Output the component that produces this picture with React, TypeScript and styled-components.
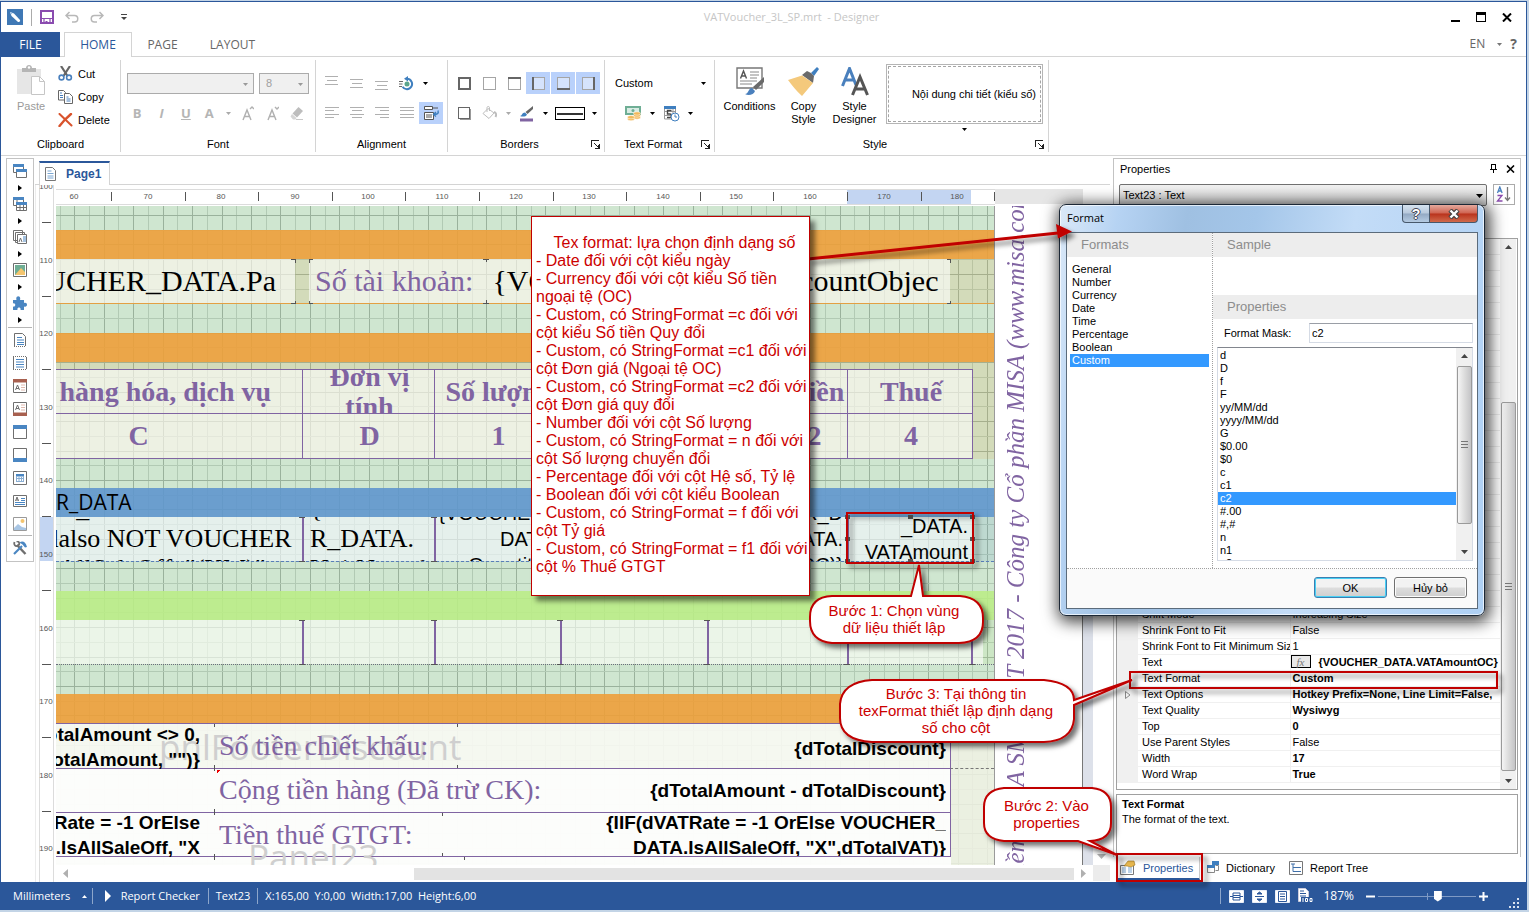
import React from "react";
import styled, { createGlobalStyle, css } from "styled-components";

const BLUE = "#2b579a";
const PURPLE = "#8064a2";
const RED = "#c00000";
const INK = "#cc0000";
const UI = `"Liberation Sans", Arial, sans-serif`;
const HUMAN = `"Open Sans", "Noto Sans", sans-serif`;
const SERIF = `"Liberation Serif", "Times New Roman", serif`;

const GlobalStyle = createGlobalStyle`
  * { box-sizing: border-box; }
  body { margin: 0; font-family: ${UI}; font-size: 11px; color: #000; overflow: hidden; }
  button, input, select { font: inherit; color: inherit; margin: 0; }
  button { padding: 0; border: 0; background: none; }
  ul { margin: 0; padding: 0; list-style: none; }
  svg { display: block; flex: none; }
`;

/* ---------- frame ---------- */

const Desktop = styled.div`
  position: relative;
  min-height: 100vh;
  padding: 1px 2px 2px 0;
  background: #c3d4e6;
  display: flex;
`;

const Window = styled.div`
  flex: 1;
  min-width: 0;
  display: flex;
  flex-direction: column;
  background: #fff;
  border: 1px solid ${BLUE};
  border-bottom: 0;
`;

const TitleBar = styled.header`
  display: flex;
  align-items: center;
  height: 30px;
  padding: 0 14px 0 6px;
`;

const QuickAccess = styled.div`
  display: flex;
  align-items: center;
  gap: 8px;
`;

const QuickButton = styled.button`
  margin-left: 3px;
`;

const QuickDivider = styled.span`
  width: 1px;
  height: 17px;
  background: #ababab;
`;

const Title = styled.h1`
  flex: 1;
  margin: 0;
  text-align: center;
  white-space: pre;
  font: 400 11px/16px ${HUMAN};
  color: #c6c6c6;
`;

const CaptionButtons = styled.div`
  display: flex;
  align-items: center;
  gap: 16px;
`;

const TabBar = styled.nav`
  display: flex;
  height: 25px;
  border-bottom: 1px solid #d4d4d4;
  font: 12px/24px ${HUMAN};
  color: #666;
`;

const RibbonTab = styled.button<{ $kind?: "file" | "active"; $width: number }>`
  width: ${(p) => p.$width}px;
  height: 25px;
  ${(p) =>
    p.$kind === "file" &&
    css`
      background: ${BLUE};
      color: #fff;
      margin-right: 4px;
    `}
  ${(p) =>
    p.$kind === "active" &&
    css`
      border: 1px solid #d4d4d4;
      border-bottom: 0;
      background: #fff;
      color: ${BLUE};
    `}
`;

const Language = styled.div`
  margin-left: auto;
  display: flex;
  align-items: center;
  gap: 12px;
  padding-right: 9px;
  b { font: 700 14px/24px ${HUMAN}; margin-left: -4px; }
`;

/* ---------- ribbon ---------- */

const Ribbon = styled.section`
  display: flex;
  height: 99px;
  padding: 3px 0;
  border-bottom: 1px solid #d4d4d4;
`;

const Group = styled.div<{ $width: number }>`
  position: relative;
  width: ${(p) => p.$width}px;
  display: flex;
  flex-direction: column;
  border-right: 1px solid #d4d4d4;
`;

const GroupBody = styled.div<{ $pad?: string }>`
  height: 76px;
  padding: ${(p) => p.$pad ?? "11px 6px 0"};
  display: flex;
  flex-direction: column;
  gap: 6px;
`;

const GroupLabel = styled.div<{ $launcher?: boolean }>`
  display: flex;
  align-items: center;
  height: 16px;
  text-align: center;
  padding-right: ${(p) => (p.$launcher ? 4 : 0)}px;
  & > span { flex: 1; }
`;

const ToolRow = styled.div<{ $gap?: number; $indent?: number }>`
  display: flex;
  align-items: center;
  height: 24px;
  gap: ${(p) => p.$gap ?? 0}px;
  padding-left: ${(p) => p.$indent ?? 0}px;
`;

const ToolButton = styled.button<{ $on?: boolean; $width?: number }>`
  display: flex;
  align-items: center;
  justify-content: center;
  width: ${(p) => p.$width ?? 25}px;
  height: 22px;
  border-right: ${(p) => (p.$on ? "1px solid #fff" : "0")};
  background: ${(p) => (p.$on ? "#b9d1fb" : "transparent")};
  color: #b5b5b5;
  font: 700 13px/20px ${HUMAN};
`;

const ComboWrap = styled.label<{ $width: number; $plain?: boolean }>`
  position: relative;
  display: flex;
  align-items: center;
  width: ${(p) => p.$width}px;
  height: 21px;
  border: ${(p) => (p.$plain ? "0" : "1px solid #ababab")};
  background: ${(p) => (p.$plain ? "#fff" : "#f0f0f0")};
  select {
    appearance: none;
    width: 100%;
    height: 100%;
    border: 0;
    padding: 0 6px;
    background: transparent;
    color: ${(p) => (p.$plain ? "#000" : "#a0a0a0")};
    opacity: 1;
  }
  svg { position: absolute; right: 5px; top: 9px; }
`;

const ClipboardBody = styled.div`
  display: flex;
  height: 76px;
  padding: 2px 0 0 15px;
  gap: 12px;
`;

const BigButton = styled.button<{ $muted?: boolean; $width: number }>`
  display: flex;
  flex-direction: column;
  align-items: center;
  width: ${(p) => p.$width}px;
  padding-top: 3px;
  gap: 4px;
  line-height: 13px;
  color: ${(p) => (p.$muted ? "#9a9a9a" : "#000")};
`;

const SmallButton = styled.button`
  display: flex;
  align-items: center;
  gap: 5px;
  height: 23px;
`;

const StyleBody = styled.div`
  display: flex;
  height: 76px;
  padding: 4px 5px 0 7px;
`;

const StylePreview = styled.button`
  display: block;
  width: 157px;
  height: 60px;
  margin-left: auto;
  padding: 1px;
  border: 1px solid #b5b5b5;
  span {
    display: flex;
    align-items: center;
    justify-content: flex-end;
    height: 56px;
    padding-right: 4px;
    border: 1px dashed #a6a6a6;
    white-space: nowrap;
  }
`;

const StyleMore = styled.button`
  position: absolute;
  right: 81px;
  bottom: 21px;
`;

/* ---------- work area ---------- */

const Main = styled.main`
  flex: 1;
  min-height: 0;
  display: flex;
`;

const Toolbox = styled.aside`
  align-self: flex-start;
  width: 28px;
  margin: 2px 0 0 5px;
  padding: 3px 0 1px;
  border: 1px solid #c3c3c3;
`;

const ToolboxButton = styled.button<{ $height: number }>`
  display: flex;
  align-items: center;
  justify-content: center;
  width: 26px;
  height: ${(p) => p.$height}px;
`;

const ToolboxLine = styled.hr`
  height: 1px;
  margin: 0 1px;
  border: 0;
  background: #b5b5b5;
`;

const Editor = styled.section`
  flex: 1;
  min-width: 0;
  margin: 5px 3px 0 1px;
  display: flex;
  flex-direction: column;
`;

const PageTabs = styled.div`
  height: 24px;
  padding-left: 4px;
  border-bottom: 1px solid #d4d4d4;
`;

const PageTab = styled.button`
  display: flex;
  align-items: center;
  gap: 10px;
  width: 71px;
  height: 24px;
  padding-left: 5px;
  border: 1px solid #d4d4d4;
  border-top: 2px solid ${BLUE};
  border-bottom: 0;
  background: #fff;
  color: ${BLUE};
  font-weight: 700;
  font-size: 12px;
`;

const EditorGrid = styled.div`
  flex: 1;
  min-height: 0;
  display: grid;
  grid-template-columns: 20px minmax(0, 1fr) 10px 17px;
  grid-template-rows: 21px minmax(0, 1fr) 17px;
  border-left: 1px solid #ececec;
`;

const VRuler = styled.div`
  grid-row: 1 / span 3;
  overflow: hidden;
  position: relative;
  svg { position: absolute; inset: 0; }
`;

const HRuler = styled.div`
  overflow: hidden;
  position: relative;
  grid-column: 2 / span 3;
  svg { position: absolute; inset: 0; }
`;

const Canvas = styled.div`
  grid-column: 2;
  grid-row: 2;
  position: relative;
  overflow: hidden;
  display: flex;
  border-right: 1px solid #777;
`;

const Gutter = styled.div`
  grid-column: 3;
  grid-row: 2;
  background: #dde1ea;
`;

const VScroll = styled.div`
  grid-column: 4;
  grid-row: 2;
  display: flex;
  align-items: flex-end;
  justify-content: center;
  padding-bottom: 4px;
`;

const HScroll = styled.div`
  grid-column: 2 / span 2;
  grid-row: 3;
  display: flex;
  align-items: center;
  padding: 0 5px 0 6px;
`;

const HThumb = styled.div`
  width: 660px;
  height: 12px;
  margin: 0 5px 0 auto;
  background: #e3e3e3;
`;

const ScrollCorner = styled.div`
  grid-column: 4;
  grid-row: 3;
  background: #ececec;
  margin-bottom: 1px;
`;

/* ---------- report sheet ---------- */

const Sheet = styled.div`
  position: relative;
  flex: none;
  width: 939px;
  background: #cfe6d0;
  border-right: 1px solid #9a9a9a;
  & > svg { position: absolute; inset: 0; }
`;

const Bands = styled.div`
  position: relative;
  padding-top: 24px;
`;

const BandGap = styled.div<{ $height: number }>`
  height: ${(p) => p.$height}px;
`;

const BandHeader = styled.div<{ $rgb: string; $height: number }>`
  height: ${(p) => p.$height}px;
  background: rgba(${(p) => p.$rgb}, 0.9);
  overflow: hidden;
  font: 21px/28px ${HUMAN};
  white-space: nowrap;
`;

const Band = styled.div<{ $rgb: string; $height: number; $line?: string }>`
  position: relative;
  height: ${(p) => p.$height}px;
  background: rgba(${(p) => p.$rgb}, 0.15);
  border-bottom: ${(p) => p.$line ?? "0"};
`;

type BoxProps = {
  $x: number;
  $y?: number;
  $w: number;
  $h: number;
  $align?: string;
  $font?: string;
  $color?: string;
  $border?: string;
  $side?: string;
  $bottom?: string;
  $fill?: number;
};

const ReportBox = styled.div<BoxProps>`
  position: absolute;
  left: ${(p) => p.$x}px;
  top: ${(p) => p.$y ?? 0}px;
  width: ${(p) => p.$w}px;
  height: ${(p) => p.$h}px;
  display: flex;
  align-items: center;
  justify-content: ${(p) => p.$align ?? "flex-start"};
  text-align: ${(p) => (p.$align === "flex-end" ? "right" : p.$align === "center" ? "center" : "left")};
  overflow: hidden;
  padding: 0 4px 0 6px;
  background: rgba(255, 255, 255, ${(p) => p.$fill ?? 0.6});
  border: ${(p) => p.$border ?? "0"};
  border-left: ${(p) => p.$side ?? p.$border ?? "0"};
  border-bottom: ${(p) => p.$bottom ?? p.$border ?? "0"};
  font: ${(p) => p.$font ?? `30px/34px ${SERIF}`};
  color: ${(p) => p.$color ?? "#000"};
  white-space: pre;
`;

const Watermark = styled.div<{ $x: number; $y: number }>`
  position: absolute;
  left: ${(p) => p.$x}px;
  top: ${(p) => p.$y}px;
  font: 35px/46px ${HUMAN};
  color: #cfcfcf;
`;

const FooterPanel = styled.div`
  position: relative;
  height: 142px;
  overflow: hidden;
  background: rgba(240, 241, 228, 0.85);
  border-top: 1px solid ${PURPLE};
`;

const FooterLabel = styled.div<{ $y: number }>`
  position: absolute;
  left: 163px;
  top: ${(p) => p.$y}px;
  height: 44px;
  font: 28px/44px ${SERIF};
  color: ${PURPLE};
  white-space: nowrap;
`;

const footBold = `700 19px/25px ${UI}`;

const FooterValue = styled.div<{ $y: number }>`
  position: absolute;
  right: 48px;
  top: ${(p) => p.$y}px;
  height: 43px;
  display: flex;
  align-items: center;
  overflow: hidden;
  text-align: right;
  font: ${footBold};
  white-space: pre;
`;

const PanelEdge = styled.div`
  position: absolute;
  left: 894px;
  top: 0;
  width: 44px;
  height: 45px;
  border-left: 1px solid ${PURPLE};
  border-bottom: 1px dashed #777;
  &::after {
    content: "";
    position: absolute;
    left: -1px;
    top: 45px;
    height: 88px;
    border-left: 1px solid ${PURPLE};
  }
`;

const PageMargin = styled.div`
  position: relative;
  flex: 1;
  background: #fff;
`;

const SideText = styled.div`
  position: absolute;
  left: 6px;
  bottom: -17px;
  writing-mode: vertical-rl;
  rotate: 180deg;
  white-space: nowrap;
  font: italic 25px/30px ${SERIF};
  color: ${PURPLE};
`;

/* ---------- properties dock ---------- */

const Dock = styled.aside`
  width: 408px;
  margin: 2px 5px 0 0;
  display: flex;
  flex-direction: column;
`;

const Panel = styled.div`
  flex: 1;
  display: flex;
  flex-direction: column;
  padding: 0 2px 3px;
  border: 1px solid #c3c3c3;
  border-bottom: 0;
`;

const PanelTitle = styled.div`
  display: flex;
  align-items: center;
  gap: 7px;
  height: 20px;
  padding: 0 2px 0 4px;
  span { flex: 1; }
`;

const PickerRow = styled.div`
  display: flex;
  gap: 6px;
  padding: 5px 3px 0;
  height: 59px;
`;

const ObjectPicker = styled.label`
  position: relative;
  flex: 1;
  height: 22px;
  select {
    appearance: none;
    width: 100%;
    height: 22px;
    padding: 0 3px;
    border: 1px solid #707070;
    border-radius: 2px;
    background: linear-gradient(#f2f2f2, #d0d0d0);
  }
  svg { position: absolute; right: 4px; top: 10px; }
`;

const SortButton = styled.button`
  display: flex;
  align-items: center;
  justify-content: center;
  width: 22px;
  height: 21px;
  border: 1px solid #ababab;
`;

const GridBox = styled.div`
  flex: 1;
  display: flex;
  border: 1px solid #a0a0a0;
  padding-right: 1px;
`;

const GridColumn = styled.div`
  flex: 1;
  min-width: 0;
  display: flex;
  flex-direction: column;
  padding-bottom: 6px;
`;

const EmptyRows = styled.div`
  flex: 1;
  background: repeating-linear-gradient(#fff 0 15px, #ececec 15px 16px);
`;

const PropTable = styled.table`
  width: 100%;
  table-layout: fixed;
  border-collapse: collapse;
  td, th {
    height: 16px;
    padding: 0 0 0 4px;
    line-height: 15px;
    overflow: hidden;
    white-space: nowrap;
    text-align: left;
    font-weight: 400;
    border-bottom: 1px solid #f0f0f0;
  }
  td:first-child { background: #f0f0f0; padding-left: 8px; }
  th { border-right: 1px solid #f0f0f0; }
`;

const ValueCell = styled.td`
  && { padding-left: 2px; }
  b { font-weight: 700; }
`;

const FxButton = styled.button`
  width: 20px;
  height: 13px;
  margin: 0 8px 0 -2px;
  border: 1px solid #000;
  background: #e8e8e8;
  color: #777;
  font: italic 11px/10px ${SERIF};
  vertical-align: top;
`;

const AeroScroll = styled.div`
  display: flex;
  flex-direction: column;
  align-items: center;
  width: 16px;
  flex: none;
  padding: 6px 0;
  background: #f0f0f0;
`;

const AeroThumb = styled.div<{ $top: number; $bottom: number }>`
  flex: 1;
  display: flex;
  align-items: center;
  justify-content: center;
  width: 15px;
  margin: ${(p) => p.$top}px 0 ${(p) => p.$bottom}px;
  border: 1px solid #9a9a9a;
  border-radius: 2px;
  background: linear-gradient(90deg, #f5f5f5, #dcdcdc 50%, #c4c4c6);
`;

const Description = styled.div`
  height: 60px;
  margin-top: 4px;
  padding: 2px 5px;
  border: 1px solid #a0a0a0;
  line-height: 15px;
  h2 { margin: 0; font-size: 11px; line-height: 15px; }
`;

const DockTabs = styled.div`
  display: flex;
  height: 25px;
`;

const DockTab = styled.button<{ $on?: boolean; $width: number }>`
  display: flex;
  align-items: center;
  gap: 7px;
  width: ${(p) => p.$width}px;
  height: 23px;
  margin-left: 4px;
  padding-left: 3px;
  color: ${(p) => (p.$on ? BLUE : "#000")};
  border-bottom: ${(p) => (p.$on ? `2px solid ${BLUE}` : "2px solid transparent")};
  border-right: ${(p) => (p.$on ? "1px solid #ccc" : "0")};
`;

/* ---------- status bar ---------- */

const StatusBar = styled.footer`
  display: flex;
  align-items: center;
  height: 28px;
  padding: 0 6px 0 12px;
  background: ${BLUE};
  color: #fff;
  font: 11px/28px ${HUMAN};
  white-space: pre;
`;

const StatusLine = styled.span<{ $gap?: number }>`
  width: 1px;
  height: 16px;
  margin: 0 ${(p) => p.$gap ?? 7}px;
  background: #8da6cb;
`;

const StatusButton = styled.button<{ $gap: number }>`
  display: flex;
  align-items: center;
  margin-right: ${(p) => p.$gap}px;
`;

const StatusRight = styled.div`
  margin-left: auto;
  display: flex;
  align-items: center;
  & > button { margin-left: 8px; }
`;

const ZoomValue = styled.span`
  margin: 0 4px 0 9px;
  font-size: 12px;
`;

const ResizeGrip = styled.svg`
  align-self: flex-end;
  margin: 10px 0 0 20px;
`;

const ZoomSlider = styled.input`
  appearance: none;
  width: 98px;
  height: 16px;
  margin: 0 -5px 0 3px;
  background: linear-gradient(#7f9ac4, #7f9ac4) 0 8px / 100% 1px no-repeat,
    linear-gradient(#7f9ac4, #7f9ac4) 50% 5px / 1px 7px no-repeat;
  &::-webkit-slider-thumb {
    appearance: none;
    width: 8px;
    height: 11px;
    background: #fff;
    clip-path: polygon(0 0, 100% 0, 100% 75%, 50% 100%, 0 75%);
  }
`;

/* ---------- Format dialog ---------- */

const Dialog = styled.div`
  position: absolute;
  left: 1059px;
  top: 204px;
  width: 426px;
  height: 412px;
  display: flex;
  flex-direction: column;
  padding: 0 6px 6px;
  border: 1px solid #1c2836;
  border-radius: 7px;
  background: linear-gradient(100deg, #dbe9f8 0, #b6d3f3 12%, #9fc0e2 26%, #a4c6e9 40%, #c3dcf7 60%, #aed0f4 100%);
  box-shadow: inset 0 0 0 1px rgba(255, 255, 255, 0.7), 2px 3px 16px 3px rgba(0, 0, 0, 0.75);
`;

const DialogTitle = styled.div`
  display: flex;
  height: 27px;
  padding-left: 1px;
  font: 11px/26px ${HUMAN};
  h2 { flex: 1; margin: 0; font: inherit; }
`;

const AeroButton = styled.button<{ $close?: boolean }>`
  display: flex;
  align-items: center;
  justify-content: center;
  width: ${(p) => (p.$close ? 48 : 28)}px;
  height: 18px;
  border: 1px solid #47586b;
  border-top: 0;
  border-left-width: ${(p) => (p.$close ? 0 : 1)}px;
  border-radius: ${(p) => (p.$close ? "0 0 4px 0" : "0 0 0 4px")};
  background: ${(p) =>
    p.$close ? "linear-gradient(#e5a99d, #cf6350 48%, #b9321c 52%, #d06a4c)" : "linear-gradient(#d5e2ef, #b8c9dc 48%, #93a9c3 52%, #b5cbe2)"};
  color: #fff;
  font: 700 14px/16px ${UI};
  text-shadow: 1px 0 0 #445, -1px 0 0 #445, 0 1px 0 #445, 0 -1px 0 #445;
`;

const DialogBody = styled.div`
  flex: 1;
  display: flex;
  flex-direction: column;
  background: #fff;
  border: 1px solid #5b6b7b;
  min-height: 0;
`;

const Columns = styled.div`
  display: flex;
  height: 336px;
  border-bottom: 1px dotted #a0a0a0;
`;

const FormatsColumn = styled.div`
  width: 146px;
  border-right: 1px dotted #a0a0a0;
`;

const DetailColumn = styled.div`
  flex: 1;
  min-width: 0;
`;

const SectionHead = styled.h3`
  height: 24px;
  margin: 0;
  padding-left: 14px;
  background: #ededed;
  color: #8c8c8c;
  font: 400 13px/24px ${UI};
`;

const SampleArea = styled.div`
  height: 38px;
`;

const OptionList = styled.ul<{ $inset?: boolean }>`
  padding: ${(p) => (p.$inset ? "6px 3px" : "1px 0")};
  flex: 1;
`;

const Option = styled.li<{ $on?: boolean }>`
  height: 13px;
  padding-left: 2px;
  line-height: 13px;
  background: ${(p) => (p.$on ? "#3399ff" : "transparent")};
  color: ${(p) => (p.$on ? "#fff" : "#000")};
`;

const MaskRow = styled.div`
  display: flex;
  align-items: center;
  justify-content: space-between;
  height: 28px;
  padding: 0 4px 0 11px;
  input {
    width: 164px;
    height: 20px;
    padding: 0 2px;
    border: 1px solid #d5dbe5;
    border-top-color: #9a9ea6;
  }
`;

const MaskList = styled.div`
  display: flex;
  height: 214px;
  margin: 0 4px;
  overflow: hidden;
  border: 1px solid #d5dbe5;
  border-top-color: #82868e;
`;

const DialogFooter = styled.div`
  flex: 1;
  display: flex;
  justify-content: flex-end;
  gap: 7px;
  padding: 8px 10px 0;
  background: #fafafa;
`;

const PushButton = styled.button<{ $primary?: boolean }>`
  width: 73px;
  height: 21px;
  border: 1px solid ${(p) => (p.$primary ? "#3c7fb1" : "#707070")};
  border-radius: 3px;
  box-shadow: inset 0 0 0 1px ${(p) => (p.$primary ? "#48d0f5" : "#fcfcfc")};
  background: linear-gradient(#f2f2f2 0 48%, #dddddd 52%, #cfcfcf);
`;

/* ---------- annotations ---------- */

const Overlay = styled.svg`
  position: absolute;
  inset: 0;
  pointer-events: none;
`;

const Note = styled.div`
  position: absolute;
  left: 531px;
  top: 216px;
  width: 279px;
  height: 380px;
  padding: 17px 4px;
  border: 1px solid ${RED};
  background: #fff;
  box-shadow: 5px 5px 5px rgba(0, 0, 0, 0.5);
  color: ${INK};
  font: 16px/18px ${UI};
  white-space: pre;
`;

const CalloutText = styled.div<{ $x: number; $y: number; $w: number }>`
  position: absolute;
  left: ${(p) => p.$x}px;
  top: ${(p) => p.$y}px;
  width: ${(p) => p.$w}px;
  text-align: center;
  color: ${INK};
  font: 15px/17px ${UI};
  white-space: pre-line;
`;

/* ---------- icons ---------- */

const Down = ({ color = "#000" }: { color?: string }) => (
  <svg width="5" height="3" viewBox="0 0 5 3"><path d="M0 0h5L2.5 3z" fill={color} /></svg>
);

const Arrow = ({ color }: { color?: string }) => (
  <ToolButton $width={13} aria-label="More"><Down color={color} /></ToolButton>
);

const Launcher = () => (
  <button aria-label="Open dialog">
    <svg width="9" height="9" viewBox="0 0 9 9" fill="none" stroke="#222" shapeRendering="crispEdges">
      <path d="M.5 7V.5H8" /><path d="M3 3l4 4" shapeRendering="auto" /><path d="M4 8.500h4.500V4M7.500 5v3" />
    </svg>
  </button>
);

const Lines = ({ rows }: { rows: [number, number, number][] }) => (
  <svg width="15" height="14" viewBox="0 0 15 14" stroke="#b0b0b0" shapeRendering="crispEdges">
    {rows.map(([x, y, w]) => <path key={y} d={`M${x} ${y + 0.5}h${w}`} />)}
  </svg>
);

const BorderIcon = ({ sides }: { sides: string }) => (
  <svg width="13" height="13" viewBox="0 0 13 13" fill="none" shapeRendering="crispEdges">
    <rect x=".5" y=".5" width="12" height="12" stroke="#a5a5a5" fill="#fff" fillOpacity=".4" />
    <path
      stroke="#666" strokeWidth="2"
      d={(sides.includes("t") ? "M0 1h13" : "") + (sides.includes("l") ? "M1 0v13" : "") + (sides.includes("b") ? "M0 12h13" : "") + (sides.includes("r") ? "M12 0v13" : "")}
    />
  </svg>
);

const LogoIcon = () => (
  <svg width="16" height="16" viewBox="0 0 16 16">
    <rect width="16" height="16" fill="#3f78b5" />
    <path d="M3 3l4 1.500 6 6.500c.6.8-.8 2.600-2 2L4.500 7z" fill="#fff" /><path d="M3 3l2.500 1-1 1.500z" fill="#9cc0e4" />
  </svg>
);

const SaveIcon = () => (
  <svg width="14" height="14" viewBox="0 0 14 14" fill="none" stroke="#8a4baf" strokeWidth="2">
    <path d="M1 1h12v12H1z" /><path d="M2 8.500h10M4 9v4M10 9v4" strokeWidth="1.200" /><path d="M6.500 11v2" />
  </svg>
);

const UndoIcon = ({ flip }: { flip?: boolean }) => (
  <svg width="14" height="12" viewBox="0 0 14 12" fill="none" stroke="#b8b8b8" strokeWidth="1.500">
    <path d={flip ? "M13 4.500H4.500a3.200 3.200 0 0 0 0 6.500H7M9.500 1L13 4.500 9.500 8" : "M1 4.500h8.500a3.200 3.200 0 0 1 0 6.500H7M4.500 1L1 4.500 4.500 8"} />
  </svg>
);

const PasteIcon = () => (
  <svg width="29" height="31" viewBox="0 0 29 31">
    <path d="M0 4h24v25H0z" fill="#e6e6e6" />
    <path d="M5 7V3h4c0-4 6-4 6 0h4v4z" fill="#b5b5b5" /><circle cx="12" cy="2.500" r="1.200" fill="#fff" />
    <path d="M14.500 11.500h8l5 5v13h-13z" fill="#fff" stroke="#c6c6c6" /><path d="M22.500 11.500v5h5" fill="none" stroke="#c6c6c6" />
  </svg>
);

const CutIcon = () => (
  <svg width="15" height="15" viewBox="0 0 15 15" fill="none">
    <path d="M3 0l6.500 10M12 0L5.500 10" stroke="#666" strokeWidth="2.200" />
    <circle cx="3.500" cy="11.500" r="2.400" stroke="#4a80bd" strokeWidth="1.600" /><circle cx="11" cy="11.500" r="2.400" stroke="#4a80bd" strokeWidth="1.600" />
  </svg>
);

const CopyIcon = () => (
  <svg width="15" height="14" viewBox="0 0 15 14" fill="#fff" stroke="#666">
    <path d="M.5.500h5l2 2v7.500h-7z" /><path d="M6.500 3.500h5l3 3v7h-8z" />
    <path d="M2 3h2M2 5.500h3M2 7.500h3M8.500 7h2M8.500 9h4M8.500 11h4" stroke="#4a80bd" />
  </svg>
);

const DeleteIcon = () => (
  <svg width="15" height="14" viewBox="0 0 15 14" fill="none" stroke="#d9532c" strokeLinecap="round">
    <path d="M1.500 1l12 11.500" strokeWidth="2" /><path d="M13 1L7 6.500 1.500 13" strokeWidth="2.400" />
  </svg>
);

const EraserIcon = () => (
  <svg width="14" height="13" viewBox="0 0 14 13"><path d="M8.500 0L13 4 7 10.500 2.500 6.500z" fill="#bdbdbd" /><path d="M2 7l4.500 4-1 1.500H3L.5 9.500z" fill="#d5d5d5" /><path d="M6 12.500h7" stroke="#c8c8c8" /></svg>
);

const RotateIcon = () => (
  <svg width="15" height="15" viewBox="0 0 15 15" fill="none">
    <path d="M8 2.800a5.200 5.200 0 1 1-4.500 8" stroke="#3f7fbf" strokeWidth="2" /><path d="M9 0L5 2.800 9 5.600z" fill="#3f7fbf" />
    <circle cx="8" cy="8" r="2.500" fill="#5ba58c" /><path d="M0 5.500h4M0 8h3.500M0 10.500h3" stroke="#666" />
  </svg>
);

const WrapIcon = () => (
  <svg width="17" height="16" viewBox="0 0 17 16" fill="none" stroke="#555">
    <path d="M1.500 1.500h8v3h-8z" fill="#fff" /><path d="M9 3h6" /><path d="M1.500 7.500h9v7h-9z" fill="#fff" /><path d="M3 10h6M3 12h6" />
    <path d="M15 5.500c1 3-1 4-4 4M13 7l-2.500 2.500L13 11.500" stroke="#3f7fbf" strokeWidth="1.400" />
  </svg>
);

const ShadowIcon = () => (
  <svg width="13" height="13" viewBox="0 0 13 13" shapeRendering="crispEdges"><path d="M2 2h11v11H2z" fill="#999" /><path d="M.5.500h11v11H.5z" fill="#fff" stroke="#666" /></svg>
);

const BucketIcon = () => (
  <svg width="15" height="14" viewBox="0 0 15 14" fill="none" stroke="#bdbdbd"><path d="M6 2.500l6 4.500-5 5.500-6-5z" /><path d="M5 6V1.500C5 .2 7.500.200 7.500 1.500V5" /><path d="M12 6c2.500 1 2.500 3 1.500 5" strokeWidth="2" /></svg>
);

const PenColorIcon = () => (
  <svg width="15" height="17" viewBox="0 0 15 17"><path d="M14 1v3L8.500 9 6.500 7z" fill="#666" /><path d="M1 11c2 0 2-3.500 5-3.500L8 9.500C7 12 3 12 1 11z" fill="#3f7fbf" /><path d="M1 13.500h13v3H1z" fill="#8064a2" /></svg>
);

const LineStyleIcon = () => (
  <svg width="30" height="13" viewBox="0 0 30 13" shapeRendering="crispEdges"><rect x=".5" y=".5" width="29" height="12" fill="#fff" stroke="#000" /><path d="M2 7h26" stroke="#333" strokeWidth="2" /></svg>
);

const MoneyIcon = () => (
  <svg width="17" height="16" viewBox="0 0 17 16">
    <rect y="1" width="16" height="9" fill="#6fae95" /><rect x="2" y="3" width="12" height="5" fill="#d9ece4" /><circle cx="8" cy="5.500" r="1.500" fill="#6fae95" />
    <g fill="#f2b95c" stroke="#fff" strokeWidth=".5"><ellipse cx="12" cy="12.500" rx="3.500" ry="1.700" /><ellipse cx="12" cy="10.500" rx="3.500" ry="1.700" /><ellipse cx="12" cy="8.500" rx="3.500" ry="1.700" /><ellipse cx="6" cy="14" rx="3.500" ry="1.700" /><ellipse cx="6" cy="12.200" rx="3.500" ry="1.700" /></g>
  </svg>
);

const CalendarIcon = () => (
  <svg width="17" height="17" viewBox="0 0 17 17" fill="none">
    <path d="M1.500 4v10h7M1 10.500h8M12.500 1v7M1 6.500h12M10 4v4" stroke="#999" /><path d="M1 1h12v3H1z" fill="#3f7fbf" />
    <path d="M8.500 5.500h-4v3.500h2.500q1.500 0 1.500 1.700T7 12.500H4" stroke="#444" strokeWidth="1.400" />
    <circle cx="12" cy="12" r="4" fill="#fff" stroke="#3f7fbf" /><path d="M12 9.500V12h2" stroke="#3f7fbf" />
  </svg>
);

const ConditionsIcon = () => (
  <svg width="28" height="29" viewBox="0 0 28 29" fill="none">
    <path d="M1 1h25v20H1z" fill="#fff" stroke="#777" strokeWidth="1.400" /><path d="M14 5h9M14 8h9M14 11h7M4 14h17M4 17h12" stroke="#888" />
    <path d="M4.500 11.500L7.500 4l3 7.500M5.500 9h4" stroke="#555" strokeWidth="1.400" />
    <path d="M28 10v5l-8 8-3-3z" fill="#6a6a6a" /><path d="M9 27c4 0 3-6 7-6l3 3c-1 4-7 5-10 3z" fill="#4a80bd" />
  </svg>
);

const BroomIcon = () => (
  <svg width="31" height="29" viewBox="0 0 31 29"><path d="M29 0l2 2-5 7-3-3z" fill="#3f7fbf" /><path d="M14 8l5-4 4 2 3 3-1 7z" fill="#6a6a6a" /><path d="M0 13l14-4.500L25 16 14 29C8 24 4 18 0 13z" fill="#f4c97c" /></svg>
);

const StylesIcon = () => (
  <svg width="28" height="29" viewBox="0 0 28 29" fill="none" strokeWidth="3"><path d="M1.500 19L8.500 1.500 15 18M4 13h9" stroke="#4a80bd" /><path d="M11.500 28l7.500-18 7.500 18M14 22h10" stroke="#555" /></svg>
);

const ToolIcon = ({ kind }: { kind: string }) => {
  const g = "#6f6f6f";
  const b = "#4a86c2";
  const art: Record<string, React.ReactNode> = {
    panels: <><path d="M.5.500h10v8H.5z" /><path d="M0 0h11v3H0z" fill={b} stroke="none" /><path d="M3.500 5.500h10v8h-10z" /><path d="M3 5h11v3H3z" fill={b} stroke="none" /></>,
    tables: <><path d="M.5.500h10v8H.5zM4 3v6" /><path d="M0 0h11v3H0z" fill={b} stroke="none" /><path d="M3.500 5.500h10v8h-10zM3 10.500h11M7 8v6M10.500 8v6" /><path d="M3 5h11v3H3z" fill={b} stroke="none" /></>,
    texts: <><path d="M.5.500h9v10h-9zM2.500 2.500h9v10h-9z" /><path d="M4.500 4.500h9v9h-9z" /><path d="M6 12l1.500-4L9 12" /><path d="M10 7h3M10 9h3M10 11h3" stroke={b} /></>,
    image: <><path d="M.5.500h13v13H.5z" /><path d="M2 2h10v10H2z" fill="#6fae95" stroke="none" /><path d="M2 12l6-7 4 4v3z" fill="#f4c56f" stroke="none" /></>,
    puzzle: <path d="M0 4h3.500c-1.500-5 5-5 3.500 0h4v3c4-1.500 4 5 0 3.500V14H7.500c1-3.500-4-3.500-3 0H0v-3.500c3 1 3-4 0-3z" fill={b} stroke="none" />,
    pageBottom: <><path d="M1.500 13V.5h8l3 3V13" /><path d="M4 4.500h5M4 7h7M4 9.500h7M4 11.500h7" stroke={b} /><path d="M1 13.500h12" strokeDasharray="1 1" /></>,
    pageBoth: <><path d="M.5 1v12M13.500 1v12" /><path d="M3 3.500h8M3 6h8M3 8.500h8M3 11h8" stroke={b} /><path d="M0 .5h14M0 13.500h14" strokeDasharray="1 1" /></>,
    redTop: <><path d="M.5.500h13v13H.5z" /><path d="M0 0h14v3.500H0z" fill="#a8604f" stroke="none" /><path d="M2.500 11l2-5 2 5M3 9.500h3" /><path d="M8 6h4M8 8.500h4M8 11h4" stroke="#e0b9ae" /></>,
    redBottom: <><path d="M.5.500h13v13H.5z" /><path d="M0 10.500h14V14H0z" fill="#a8604f" stroke="none" /><path d="M2.500 8l2-5 2 5M3 6.500h3" /><path d="M8 3h4M8 5.500h4M8 8h4" stroke="#e0b9ae" /></>,
    header: <><path d="M.5.500h13v13H.5z" /><path d="M0 0h14v4H0z" fill={b} stroke="none" /></>,
    footer: <><path d="M.5.500h13v13H.5z" /><path d="M0 10h14v4H0z" fill={b} stroke="none" /></>,
    data: <><path d="M.5.500h13v13H.5z" /><path d="M3 3h8v2.500H3z" fill={b} stroke="none" /><path d="M3 7.500h8M3 10.500h8M3.500 5v6M6 6v5M8.500 6v5M10.500 5v6" stroke="#8aaed3" /></>,
    textBox: <><path d="M.5 1.500h13v11H.5z" /><path d="M2.500 7l1.500-4 1.500 4M3 6h2.500" /><path d="M8 4.500h4M8 6.500h4M2 8.500h10M2 10.500h10" stroke={b} /></>,
    picture: <><path d="M.5.500h13v13H.5z" stroke="#9a9a9a" /><circle cx="9.500" cy="4" r="2" fill="#f4c56f" stroke="none" /><path d="M1 13v-2l4-4 4 3 4 1v2z" fill="#a9c6e4" stroke="none" /></>,
    tools: <><path d="M4 4l8.500 9" strokeWidth="2.400" /><path d="M1.500 1c-1 3 1 5 3.500 3.500S6 0 3.500.5" fill="none" strokeWidth="1.800" /><path d="M6.500 1.500c3-2 6-1 7.500 4.500l-2 .5-2.500-3z" fill={b} stroke="none" /><path d="M1 13l8-8" stroke={b} strokeWidth="2.200" /></>,
  };
  return <svg width="14" height="14" viewBox="0 0 14 14" fill="#fff" stroke={g}>{art[kind]}</svg>;
};

const PageIcon = () => (
  <svg width="11" height="14" viewBox="0 0 11 14" fill="#fff" stroke="#777"><path d="M.5.500h7l3 3v10H.5z" /><path d="M2.500 4h4M2.500 6.500h6M2.500 9h6M2.500 11h6" stroke="#7ba6d2" /></svg>
);

const Side = () => <svg width="4" height="6" viewBox="0 0 4 6"><path d="M0 0l4 3-4 3z" stroke="none" /></svg>;

const Tri = ({ d, color = "#b0b0b0", w = 9, h = 9 }: { d: string; color?: string; w?: number; h?: number }) => (
  <svg width={w} height={h} viewBox={`0 0 ${w} ${h}`}><path d={d} fill={color} /></svg>
);

const ScrollUp = () => <Tri w={7} h={4} color="#444" d="M0 4L3.500 0 7 4z" />;
const ScrollDown = () => <Tri w={7} h={4} color="#444" d="M0 0h7L3.500 4z" />;
const Grip = () => <svg width="7" height="8" viewBox="0 0 7 8" stroke="#777" shapeRendering="crispEdges"><path d="M0 .5h7M0 3.500h7M0 6.500h7" /></svg>;

const StatusIcon = ({ d, fill }: { d: string; fill?: string }) => (
  <svg width="15" height="15" viewBox="0 0 15 15"><path d="M.5 1.500h14v12H.5z" fill="#fff" stroke="#e8eef8" /><path d={d} fill={fill ?? "none"} stroke={BLUE} /></svg>
);

/* ---------- data ---------- */

const toolGroups = ["panels", "tables", "texts", "image", "puzzle"];
const toolItems = ["pageBottom", "pageBoth", "redTop", "redBottom", "header", "footer", "data", "textBox", "picture"];

const properties: { name: string; value: string; strong?: boolean; fx?: boolean; expand?: boolean }[] = [
  { name: "Shift Mode", value: "Increasing Size" },
  { name: "Shrink Font to Fit", value: "False" },
  { name: "Shrink Font to Fit Minimum Size", value: "1" },
  { name: "Text", value: "{VOUCHER_DATA.VATAmountOC}", strong: true, fx: true },
  { name: "Text Format", value: "Custom", strong: true },
  { name: "Text Options", value: "Hotkey Prefix=None, Line Limit=False,", strong: true, expand: true },
  { name: "Text Quality", value: "Wysiwyg", strong: true },
  { name: "Top", value: "0", strong: true },
  { name: "Use Parent Styles", value: "False" },
  { name: "Width", value: "17", strong: true },
  { name: "Word Wrap", value: "True", strong: true },
];

const formats = ["General", "Number", "Currency", "Date", "Time", "Percentage", "Boolean", "Custom"];
const masks = ["d", "D", "f", "F", "yy/MM/dd", "yyyy/MM/dd", "G", "$0.00", "$0", "c", "c1", "c2", "#.00", "#,#", "n", "n1", "n2"];

const noteText = `    Tex format: lựa chọn định dạng số
- Date đối với cột kiểu ngày
- Currency đối với cột kiểu Số tiền
ngoại tệ (OC)
- Custom, có StringFormat =c đối với
cột kiểu Số tiền Quy đổi
- Custom, có StringFormat =c1 đối với
cột Đơn giá (Ngoại tệ OC)
- Custom, có StringFormat =c2 đối với
cột Đơn giá quy đổi
- Number đối với cột Số lượng
- Custom, có StringFormat = n đối với
cột Số lượng chuyển đổi
- Percentage đối với cột Hệ số, Tỷ lệ
- Boolean đối với cột kiểu Boolean
- Custom, có StringFormat = f đối với
cột Tỷ giá
- Custom, có StringFormat = f1 đối với
cột % Thuế GTGT`;

const ORANGE = "237,158,58";
const SKY = "95,150,205";
const LIME = "186,236,135";

const MM10 = 73.6;
const range = (n: number) => Array.from({ length: n }, (_, i) => i);

/* column edges of the report table, in sheet pixels */
const cols = [-84, 246, 378, 504, 651, 791, 916];
const heads = ["Tên hàng hóa, dịch vụ", "Đơn vị\ntính", "Số lượng", "Đơn giá", "Thành tiền", "Thuế"];
const marks = ["C", "D", "1", "2", "3 = 1x2", "4"];

const boldHead = `700 28px/30px ${SERIF}`;
const sansCell = `20px/26px ${UI}`;
const serifCell = `26px/30px ${SERIF}`;

/* ---------- pieces ---------- */

const GridLines = () => (
  <svg width="938" height="700" shapeRendering="crispEdges">
    {range(64).map((i) => {
      const x = Math.round(3.6 + i * (MM10 / 5));
      return <path key={`v${i}`} d={`M${x}.5 0V700`} stroke={i % 2 ? "#9ab29c" : "#b2cab4"} />;
    })}
    {range(46).map((i) => {
      const y = Math.round(9 + i * (MM10 / 5));
      return <path key={`h${i}`} d={`M0 ${y}.5H938`} stroke={i % 2 ? "#b2cab4" : "#9ab29c"} />;
    })}
  </svg>
);

const CornerMarks = () => (
  <svg width="938" height="659" fill="none" stroke="#555" shapeRendering="crispEdges">
    <path d="M235 53.500h4.500v3M235 97.500h4.500v-3M257 53.500h-3.500v3M257 97.500h-3.500v-3M427 53.500h6M430.500 53v3M427 97.500h6M430.500 97v-3M891 53.500h3.500v3M891 97.500h3.500v-3" />
    <path d="M158.500 518v3M401.500 518v3M158.500 559v6M401.500 559v3M158.500 603v6M386.500 607v3M158.500 648v6M386.500 647v3M408.500 651v3" />
    <path d="M161 564h3l-3 3z" fill="#e00" stroke="none" />
    {[246, 378, 504, 651, 791, 916].map((x) => <path key={x} d={`M${x - 3} 414.500h6M${x - 3} 458.500h6`} />)}
    {[246, 378, 504, 651].map((x) => <path key={x} d={`M${x - 3} 311.500h6M${x - 3} 355.500h6`} />)}
    <path d="M789 309h5v4h-5zM852 309h5v4h-5zM914 309h5v4h-5zM789 331h5v4h-5zM914 331h5v4h-5zM789 353h5v4h-5zM852 353h5v4h-5zM914 353h5v4h-5z" fill="#555" stroke="none" />
  </svg>
);

const Report = () => (
  <Sheet>
    <GridLines />
    <Bands>
      <BandHeader $rgb={ORANGE} $height={29} />
      <Band $rgb={ORANGE} $height={45} $line="1px solid #e3a043">
        <ReportBox $x={-100} $w={339} $h={44} $align="flex-end">{"{VOUCHER_DATA.Pa  "}</ReportBox>
        <ReportBox $x={253} $w={177} $h={44} $color={PURPLE}>Số tài khoản:</ReportBox>
        <ReportBox $x={430} $w={464} $h={44} $align="flex-end">{"{VOUCHER_DATA.  AccountObjec "}</ReportBox>
      </Band>
      <BandGap $height={29} />
      <BandHeader $rgb={ORANGE} $height={29} />
      <Band $rgb={ORANGE} $height={97}>
        {heads.map((text, i) => (
          <React.Fragment key={text}>
            <ReportBox $x={cols[i]} $y={7} $w={cols[i + 1] - cols[i] + 1} $h={45} $align="center" $font={boldHead} $color={PURPLE} $border={`1px solid ${PURPLE}`}>
              {text}
            </ReportBox>
            <ReportBox $x={cols[i]} $y={51} $w={cols[i + 1] - cols[i] + 1} $h={46} $align="center" $font={boldHead} $color={PURPLE} $border={`1px solid ${PURPLE}`}>
              {marks[i]}
            </ReportBox>
          </React.Fragment>
        ))}
      </Band>
      <BandGap $height={29} />
      <BandHeader $rgb={SKY} $height={29}>R_DATA</BandHeader>
      <Band $rgb={SKY} $height={45} $line="1px dashed #5a7fb8">
        <ReportBox $x={-60} $w={306} $h={44} $align="flex-end" $font={serifCell}>{"IIF(VOUCHER_DATA.IsPromotion \nVOUCHER_DATAndalso NOT VOUCHER \n_DATA.IsAllSaleOff, \"(KM)\",    "}</ReportBox>
        <ReportBox $x={246} $w={132} $h={44} $font={serifCell} $side={`2px solid ${PURPLE}`}>{"{VOUCHE\nR_DATA.\nUnitName}"}</ReportBox>
        <ReportBox $x={378} $w={126} $h={44} $align="flex-end" $font={sansCell} $side={`2px solid ${PURPLE}`}>{"{VOUCHER_\nDATA.\nQuantity)}"}</ReportBox>
        <ReportBox $x={504} $w={147} $h={44} $align="flex-end" $font={sansCell} $side={`2px solid ${PURPLE}`} />
        <ReportBox $x={651} $w={140} $h={44} $align="flex-end" $font={sansCell} $side={`2px solid ${PURPLE}`}>{"{VOUCHER_D\nDATA.\nAmountOC)}"}</ReportBox>
        <ReportBox $x={791} $w={125} $h={44} $align="flex-end" $font={sansCell} $side={`2px solid ${PURPLE}`}>{"_DATA.\nVATAmount"}</ReportBox>
      </Band>
      <BandGap $height={29} />
      <BandHeader $rgb={LIME} $height={29} />
      <Band $rgb={LIME} $height={45} $line="1px dotted #6b6b80">
        {cols.slice(0, -1).map((x, i) => (
          <ReportBox key={x} $x={x} $w={cols[i + 1] - x} $h={44} $side={`2px solid ${PURPLE}`} />
        ))}
        <ReportBox $x={915} $w={2} $h={44} $side={`2px solid ${PURPLE}`} />
      </Band>
      <BandGap $height={29} />
      <BandHeader $rgb={ORANGE} $height={29} />
      <FooterPanel>
        <ReportBox $x={-40} $w={935} $h={45} $fill={0.5} $bottom={`1px solid ${PURPLE}`} />
        <ReportBox $x={-40} $y={45} $w={935} $h={44} $fill={0.85} $bottom={`1px solid ${PURPLE}`} />
        <ReportBox $x={-40} $y={89} $w={935} $h={44} $fill={0.85} $bottom={`1px solid ${PURPLE}`} />
        <ReportBox $x={-40} $y={133} $w={935} $h={20} $fill={0.85} />
        <Watermark $x={103} $y={0}>pnlFooterDiscount</Watermark>
        <Watermark $x={192} $y={110}>Panel23</Watermark>
        <ReportBox $x={-100} $w={248} $h={45} $align="flex-end" $font={footBold} $fill={0}>{"{IIF(dTotalAmount <> 0,\ndTotalAmount, \"\")}"}</ReportBox>
        <FooterLabel $y={0}>Số tiền chiết khấu:</FooterLabel>
        <FooterValue $y={3}>{"{dTotalDiscount}"}</FooterValue>
        <FooterLabel $y={44}>Cộng tiền hàng (Đã trừ CK):</FooterLabel>
        <FooterValue $y={45}>{"{dTotalAmount - dTotalDiscount}"}</FooterValue>
        <ReportBox $x={-100} $y={89} $w={248} $h={44} $align="flex-end" $font={footBold} $fill={0}>{"{IIF(dVATRate = -1 OrElse\nDATA.IsAllSaleOff, \"X"}</ReportBox>
        <FooterLabel $y={89}>Tiền thuế GTGT:</FooterLabel>
        <FooterValue $y={89}>{"{IIF(dVATRate = -1 OrElse VOUCHER_\nDATA.IsAllSaleOff, \"X\",dTotalVAT)}"}</FooterValue>
        <PanelEdge />
      </FooterPanel>
    </Bands>
    <CornerMarks />
  </Sheet>
);

const rulerFont = { fontFamily: "Liberation Sans", fontSize: 8, fill: "#555", textAnchor: "middle" as const };

const TopRuler = () => (
  <HRuler>
    <svg width="1028" height="21" shapeRendering="crispEdges">
      <path d="M0 4.500h1027M0 19.500h939" stroke="#dcdcdc" />
      <path d="M791 5h124v14H791z" fill="#c3d5f2" />
      <path d="M939 4h88v15h-88z" fill="#e6e6e6" />
      {range(13).map((i) => <path key={i} d={`M${Math.round(55 + i * MM10)}.5 7v9`} stroke="#555" />)}
      {range(13).map((i) => <text key={i} x={Math.round(18 + i * MM10)} y="14" {...rulerFont}>{60 + i * 10}</text>)}
    </svg>
  </HRuler>
);

const LeftRuler = () => (
  <VRuler>
    <svg width="20" height="697" shapeRendering="crispEdges">
      <path d="M4 332h13v44H4z" fill="#c3d5f2" />
      <path d="M3.500 0v697M17.500 0v697" stroke="#dcdcdc" />
      {range(9).map((i) => <path key={i} d={`M6 ${Math.round(37 + i * MM10)}.5h9`} stroke="#555" />)}
      {range(10).map((i) => <text key={i} x="10" y={Math.round(4 + i * MM10)} {...rulerFont}>{100 + i * 10}</text>)}
    </svg>
  </VRuler>
);

const FormatDialog = () => (
  <Dialog role="dialog" aria-label="Format">
    <DialogTitle>
      <h2>Format</h2>
      <AeroButton aria-label="Help">?</AeroButton>
      <AeroButton $close aria-label="Close">
        <svg width="12" height="10" viewBox="0 0 12 10"><path d="M2 1l8 8M10 1L2 9" stroke="#444" strokeWidth="4.600" /><path d="M2.500 1.500l7 7M9.500 1.500l-7 7" stroke="#fff" strokeWidth="2.400" /></svg>
      </AeroButton>
    </DialogTitle>
    <DialogBody>
      <Columns>
        <FormatsColumn>
          <SectionHead>Formats</SectionHead>
          <OptionList $inset role="listbox" aria-label="Formats">
            {formats.map((f) => <Option key={f} role="option" $on={f === "Custom"}>{f}</Option>)}
          </OptionList>
        </FormatsColumn>
        <DetailColumn>
          <SectionHead>Sample</SectionHead>
          <SampleArea />
          <SectionHead>Properties</SectionHead>
          <MaskRow>
            <label htmlFor="mask">Format Mask:</label>
            <input id="mask" defaultValue="c2" />
          </MaskRow>
          <MaskList>
            <OptionList role="listbox" aria-label="Masks">
              {masks.map((m) => <Option key={m} role="option" $on={m === "c2"}>{m}</Option>)}
            </OptionList>
            <AeroScroll><ScrollUp /><AeroThumb $top={8} $bottom={26}><Grip /></AeroThumb><ScrollDown /></AeroScroll>
          </MaskList>
        </DetailColumn>
      </Columns>
      <DialogFooter>
        <PushButton $primary>OK</PushButton>
        <PushButton>Hủy bỏ</PushButton>
      </DialogFooter>
    </DialogBody>
  </Dialog>
);

const Annotations = () => (
  <>
    <Overlay width="1529" height="912" fill="none" stroke={RED}>
      <defs>
        <filter id="drop" x="-20%" y="-20%" width="150%" height="160%"><feDropShadow dx="4" dy="4" stdDeviation="2.500" floodColor="#000" floodOpacity=".55" /></filter>
      </defs>
      <g filter="url(#drop)">
        <path d="M808 259L1058 233" strokeWidth="3" /><path d="M1056 224l16 7.500-14 7z" fill={RED} stroke="none" />
        <path d="M847 513h126v50H847z" strokeWidth="2" />
        <path d="M1130 672h367v16h-367z" strokeWidth="2" />
        <path d="M1117 854h85v27h-85z" strokeWidth="2" />
      </g>
      <g filter="url(#drop)" fill="#fff" strokeWidth="2">
        <path d="M832 596h79l8-31 4 31h37q23 2 23 22v4q0 20-24 21H832q-22-2-22-22v-4q0-20 22-21z" />
        <path d="M872 680h172q30 3 30 20l58-20-58 25v14q-2 22-30 23H872q-32-2-32-24v-14q2-22 32-24z" />
        <path d="M1004 788h88q19 2 19 19v16q0 17-21 18l27 14-39-14h-74q-20-2-20-18v-16q0-17 20-19z" />
      </g>
    </Overlay>
    <Note>{noteText}</Note>
    <CalloutText $x={810} $y={602} $w={168}>{"Bước 1: Chọn vùng\ndữ liệu thiết lập"}</CalloutText>
    <CalloutText $x={840} $y={685} $w={232}>{"Bước 3: Tại thông tin\ntexFormat thiết lập định dạng\nsố cho cột"}</CalloutText>
    <CalloutText $x={984} $y={797} $w={125}>{"Bước 2: Vào\nproperties"}</CalloutText>
  </>
);

export default function App() {
  return (
    <Desktop>
      <GlobalStyle />
      <Window>
        <TitleBar>
          <QuickAccess>
            <LogoIcon /><QuickDivider />
            <button aria-label="Save"><SaveIcon /></button>
            <QuickButton aria-label="Undo"><UndoIcon /></QuickButton>
            <QuickButton aria-label="Redo"><UndoIcon flip /></QuickButton>
            <QuickButton aria-label="Customize">
              <svg width="18" height="6" viewBox="5 0 18 6"><path d="M11 .5h6" stroke="#444" /><path d="M11 3h6l-3 3z" fill="#444" /></svg>
            </QuickButton>
          </QuickAccess>
          <Title>{"VATVoucher_3L_SP.mrt  - Designer"}</Title>
          <CaptionButtons>
            <button aria-label="Minimize"><svg width="10" height="10"><path d="M1 9h9" stroke="#000" strokeWidth="2" /></svg></button>
            <button aria-label="Maximize"><svg width="10" height="10" fill="none" stroke="#000" shapeRendering="crispEdges"><path d="M.5.500h9v9h-9z" /><path d="M0 1.500h10" strokeWidth="3" /></svg></button>
            <button aria-label="Close"><svg width="10" height="9"><path d="M1 .5l8 8M9 .5l-8 8" stroke="#000" strokeWidth="2" /></svg></button>
          </CaptionButtons>
        </TitleBar>
        <TabBar>
          <RibbonTab $kind="file" $width={59}>FILE</RibbonTab>
          <RibbonTab $kind="active" $width={68}>HOME</RibbonTab>
          <RibbonTab $width={61}>PAGE</RibbonTab>
          <RibbonTab $width={79}>LAYOUT</RibbonTab>
          <Language><span>EN</span><Down color="#777" /><b>?</b></Language>
        </TabBar>

        <Ribbon>
          <Group $width={120}>
            <ClipboardBody>
              <BigButton $muted $width={30}><PasteIcon />Paste</BigButton>
              <div>
                <SmallButton><CutIcon />Cut</SmallButton>
                <SmallButton><CopyIcon />Copy</SmallButton>
                <SmallButton><DeleteIcon />Delete</SmallButton>
              </div>
            </ClipboardBody>
            <GroupLabel><span>Clipboard</span></GroupLabel>
          </Group>

          <Group $width={195}>
            <GroupBody>
              <ToolRow $gap={5}>
                <ComboWrap $width={127}><select aria-label="Font" disabled /><Down color="#999" /></ComboWrap>
                <ComboWrap $width={50}><select aria-label="Font size" disabled><option>8</option></select><Down color="#999" /></ComboWrap>
              </ToolRow>
              <ToolRow>
                <ToolButton $width={21}>B</ToolButton>
                <ToolButton $width={29}><i>I</i></ToolButton>
                <ToolButton $width={21}><u>U</u></ToolButton>
                <ToolButton $width={27}>A</ToolButton>
                <Arrow color="#aaa" />
                <ToolButton $width={26}><svg width="12" height="15" fill="none" stroke="#b0b0b0" strokeWidth="1.400"><path d="M1 14L5 4l4 10M2.500 10.500h5" /><path d="M8 3l2-2 2 2" /></svg></ToolButton>
                <ToolButton $width={25}><svg width="12" height="15" fill="none" stroke="#b0b0b0" strokeWidth="1.400"><path d="M1 14L5 4l4 10M2.500 10.500h5" /><path d="M8 1l2 2 2-2" /></svg></ToolButton>
                <ToolButton $width={25}><EraserIcon /></ToolButton>
              </ToolRow>
            </GroupBody>
            <GroupLabel><span>Font</span></GroupLabel>
          </Group>

          <Group $width={132}>
            <GroupBody $pad="11px 3px 0">
              <ToolRow>
                <ToolButton><Lines rows={[[1, 0, 13], [3, 4, 10], [1, 8, 13]]} /></ToolButton>
                <ToolButton><Lines rows={[[1, 3, 13], [3, 7, 10], [1, 11, 13]]} /></ToolButton>
                <ToolButton><Lines rows={[[1, 5, 13], [3, 9, 10], [1, 13, 13]]} /></ToolButton>
                <ToolButton><RotateIcon /></ToolButton>
                <Arrow />
              </ToolRow>
              <ToolRow>
                <ToolButton><Lines rows={[[1, 1, 14], [1, 4, 9], [1, 8, 14], [1, 11, 9]]} /></ToolButton>
                <ToolButton><Lines rows={[[1, 1, 14], [3, 4, 10], [1, 8, 14], [3, 11, 10]]} /></ToolButton>
                <ToolButton><Lines rows={[[1, 1, 14], [6, 4, 9], [1, 8, 14], [6, 11, 9]]} /></ToolButton>
                <ToolButton><Lines rows={[[1, 1, 14], [1, 4, 14], [1, 8, 14], [1, 11, 14]]} /></ToolButton>
                <ToolButton $on><WrapIcon /></ToolButton>
              </ToolRow>
            </GroupBody>
            <GroupLabel><span>Alignment</span></GroupLabel>
          </Group>

          <Group $width={157}>
            <GroupBody $pad="11px 3px 0 4px">
              <ToolRow>
                {["tlbr", "", "t", "l", "b", "r"].map((s, i) => (
                  <ToolButton key={s} $on={i > 2} aria-label="Border"><BorderIcon sides={s} /></ToolButton>
                ))}
              </ToolRow>
              <ToolRow>
                <ToolButton><ShadowIcon /></ToolButton>
                <ToolButton><BucketIcon /></ToolButton>
                <Arrow color="#aaa" />
                <ToolButton><PenColorIcon /></ToolButton>
                <Arrow />
                <ToolButton $width={36}><LineStyleIcon /></ToolButton>
                <Arrow />
              </ToolRow>
            </GroupBody>
            <GroupLabel $launcher><span>Borders</span><Launcher /></GroupLabel>
          </Group>

          <Group $width={110}>
            <GroupBody $pad="11px 3px 0 4px">
              <ToolRow>
                <ComboWrap $plain $width={102}><select aria-label="Text format"><option>Custom</option></select><Down /></ComboWrap>
              </ToolRow>
              <ToolRow $indent={12}>
                <ToolButton><MoneyIcon /></ToolButton>
                <Arrow />
                <ToolButton><CalendarIcon /></ToolButton>
                <Arrow />
              </ToolRow>
            </GroupBody>
            <GroupLabel $launcher><span>Text Format</span><Launcher /></GroupLabel>
          </Group>

          <Group $width={334}>
            <StyleBody>
              <BigButton $width={55}><ConditionsIcon />Conditions</BigButton>
              <BigButton $width={53}><BroomIcon />Copy<br />Style</BigButton>
              <BigButton $width={49}><StylesIcon />Style<br />Designer</BigButton>
              <StylePreview><span>Nội dung chi tiết (kiểu số)</span></StylePreview>
            </StyleBody>
            <StyleMore aria-label="More styles"><Down /></StyleMore>
            <GroupLabel $launcher><span>Style</span><Launcher /></GroupLabel>
          </Group>
        </Ribbon>

        <Main>
          <Toolbox>
            {toolGroups.map((k) => (
              <React.Fragment key={k}>
                <ToolboxButton $height={18} aria-label={k}><ToolIcon kind={k} /></ToolboxButton>
                <ToolboxButton $height={15} aria-label={`${k} menu`}><Side /></ToolboxButton>
              </React.Fragment>
            ))}
            <ToolboxLine />
            {toolItems.map((k) => <ToolboxButton key={k} $height={23} aria-label={k}><ToolIcon kind={k} /></ToolboxButton>)}
            <ToolboxLine />
            <ToolboxButton $height={24} aria-label="tools"><ToolIcon kind="tools" /></ToolboxButton>
          </Toolbox>

          <Editor>
            <PageTabs><PageTab><PageIcon />Page1</PageTab></PageTabs>
            <EditorGrid>
              <LeftRuler />
              <TopRuler />
              <Canvas>
                <Report />
                <PageMargin><SideText>mềm MISA SME.NET 2017 - Công ty Cổ phần MISA (www.misa.com.vn)</SideText></PageMargin>
              </Canvas>
              <Gutter />
              <VScroll><Tri d="M0 2h9L4.500 7z" /></VScroll>
              <HScroll><Tri d="M6 0v9L1 4.500z" /><HThumb /><Tri d="M2 0v9l5-4.500z" /></HScroll>
              <ScrollCorner />
            </EditorGrid>
          </Editor>

          <Dock>
            <Panel>
              <PanelTitle>
                <span>Properties</span>
                <svg width="9" height="10" viewBox="0 0 9 10" fill="none" stroke="#000" shapeRendering="crispEdges"><path d="M2.500 0v5M2 .5h5M6 0v5M1 5.500h7M4.500 5v4" /></svg>
                <svg width="11" height="8" viewBox="0 0 11 8"><path d="M2 .5l7 7M9 .5l-7 7" stroke="#000" strokeWidth="1.600" /></svg>
              </PanelTitle>
              <PickerRow>
                <ObjectPicker><select aria-label="Component"><option>Text23 : Text</option></select><Tri w={7} h={4} color="#000" d="M0 0h7L3.500 4z" /></ObjectPicker>
                <SortButton aria-label="Sort">
                  <svg width="16" height="17" viewBox="0 0 16 17" fill="none" strokeWidth="1.300"><path d="M1.500 7l2.300-6 2.300 6M2.300 5h3" stroke="#4a80bd" /><path d="M1.500 9.500h4.500l-4.500 5.500h5" stroke="#8a4baf" /><path d="M11.500 1v13M9 11.500l2.500 3 2.500-3" stroke="#777" /></svg>
                </SortButton>
              </PickerRow>
              <GridBox>
                <GridColumn>
                  <EmptyRows />
                  <PropTable>
                    <colgroup><col width="21" /><col width="152" /><col /></colgroup>
                    <tbody>
                      {properties.map((p) => (
                        <tr key={p.name}>
                          <td>{p.expand && <svg width="6" height="8" viewBox="0 0 6 8" fill="none" stroke="#888"><path d="M.5.500l4.500 3.500L.5 7.500z" /></svg>}</td>
                          <th scope="row">{p.name}</th>
                          <ValueCell>{p.fx && <FxButton>fx</FxButton>}{p.strong ? <b>{p.value}</b> : p.value}</ValueCell>
                        </tr>
                      ))}
                    </tbody>
                  </PropTable>
                </GridColumn>
                <AeroScroll><ScrollUp /><AeroThumb $top={153} $bottom={8}><Grip /></AeroThumb><ScrollDown /></AeroScroll>
              </GridBox>
              <Description><h2>Text Format</h2>The format of the text.</Description>
            </Panel>
            <DockTabs>
              <DockTab $on $width={83}>
                <svg width="16" height="15" viewBox="0 0 16 15"><path d="M.5 5.500h13v9H.5z" fill="#fff" stroke="#777" /><path d="M2 8h4M2 10h4M2 12h4M8 8h4M8 10h4M8 12h4" stroke="#7ba6d2" /><path d="M4 6l4-5 6 0 1 4-4 2-4-1z" fill="#e8b84e" stroke="#9a7420" strokeWidth=".6" /></svg>
                Properties
              </DockTab>
              <DockTab $width={78}>
                <svg width="12" height="13" viewBox="0 0 12 13"><path d="M.5 4.500h7v7h-7z" fill="#fff" stroke="#888" /><path d="M0 4h8v3H0zM5 0h7v4H5z" fill="#3f7fbf" /><path d="M8.500 4.500h3v5h-3" fill="#fff" stroke="#888" /></svg>
                Dictionary
              </DockTab>
              <DockTab $width={90}>
                <svg width="14" height="14" viewBox="0 0 14 14" fill="#fff" stroke="#777"><path d="M.5.500h13v13H.5z" /><path d="M2 3h4M4 3v7.500h4M4 6.500h4M8 6.500h4M8 10.500h4" stroke="#3f6fa8" /></svg>
                Report Tree
              </DockTab>
            </DockTabs>
          </Dock>
        </Main>

        <StatusBar>
          <StatusButton $gap={4}>{"Millimeters    "}<Tri w={5} h={3} color="#fff" d="M0 3L2.500 0 5 3z" /></StatusButton>
          <StatusLine $gap={1} />
          <StatusButton $gap={1}><svg width="27" height="12" viewBox="0 0 27 12"><path d="M11 0l6 6-6 6z" fill="#fff" /></svg>Report Checker</StatusButton>
          <StatusLine />
          <span>Text23</span>
          <StatusLine />
          <span>{"X:165,00  Y:0,00  Width:17,00  Height:6,00"}</span>
          <StatusRight>
            <StatusLine $gap={0} />
            <StatusButton $gap={0} aria-label="Page width"><StatusIcon d="M4 4h7v7H4zM4 6.500h7M4 8.500h7M1 7.500h3M11 7.500h3" /></StatusButton>
            <StatusButton $gap={0} aria-label="Page height"><StatusIcon d="M3 7.500h9M7.500 3L5 5h5zM7.500 12L5 10h5z" fill={BLUE} /></StatusButton>
            <StatusButton $gap={0} aria-label="Whole page"><StatusIcon d="M3.500 2.500h8v10h-8zM5 5h5M5 7.500h5M5 10h5" /></StatusButton>
            <StatusButton $gap={0} aria-label="100%">
              <svg width="16" height="16" viewBox="0 0 16 16"><path d="M.5.500h7l3 3v10h-10z" fill="#fff" stroke="#ccd" /><path d="M2 3h4M2 5.500h6M2 8h6" stroke={BLUE} /><path d="M3 9h13v6H3z" fill={BLUE} /><path d="M5 10v4M7.500 10.500h2v3h-2zM12 10.500h2v3h-2z" fill="none" stroke="#fff" /></svg>
            </StatusButton>
            <ZoomValue>187%</ZoomValue>
            <button aria-label="Zoom out"><svg width="9" height="9"><path d="M0 4.500h9" stroke="#fff" strokeWidth="2" /></svg></button>
            <ZoomSlider type="range" min="0" max="100" defaultValue="62" aria-label="Zoom" />
            <button aria-label="Zoom in"><svg width="9" height="9"><path d="M0 4.500h9M4.500 0v9" stroke="#fff" strokeWidth="2" /></svg></button>
            <ResizeGrip width="12" height="12" fill="#d8e2f0">
              {[[9, 0], [5, 4], [9, 4], [1, 8], [5, 8], [9, 8]].map(([x, y]) => <rect key={`${x}${y}`} x={x} y={y} width="2" height="2" />)}
            </ResizeGrip>
          </StatusRight>
        </StatusBar>
      </Window>
      <FormatDialog />
      <Annotations />
    </Desktop>
  );
}
